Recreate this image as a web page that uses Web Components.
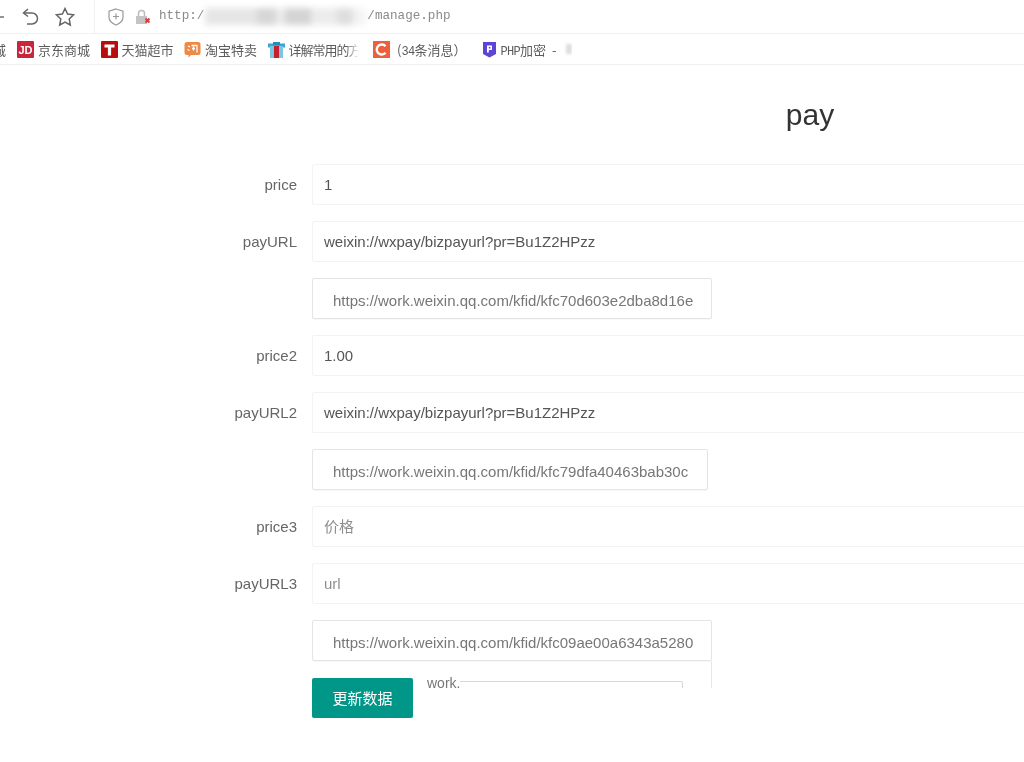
<!DOCTYPE html>
<html lang="zh">
<head>
<meta charset="utf-8">
<title>pay</title>
<style>
  html, body { margin: 0; height: 100%; background: #fff; overflow: hidden; }
  body { font-family: "Liberation Sans", "Noto Sans CJK SC", sans-serif; filter: blur(.35px); }
</style>
</head>
<body>
<browser-toolbar></browser-toolbar>
<bookmark-bar>
  <bookmark-item kind="clip" label="城" style="margin-right:0.500px"></bookmark-item>
  <bookmark-item kind="jd" label="京东商城"></bookmark-item>
  <bookmark-item kind="t" label="天猫超市"></bookmark-item>
  <bookmark-item kind="tao" label="淘宝特卖"></bookmark-item>
  <bookmark-item kind="box" label="详解常用的方" fade style="width:95px"></bookmark-item>
  <bookmark-item kind="c" label=" (34条消息）" style="width:98px"></bookmark-item>
  <bookmark-item kind="p" label="PHP加密  - "></bookmark-item>
</bookmark-bar>
<pay-form heading="pay">
  <form-row label="price" value="1"></form-row>
  <form-row label="payURL" value="weixin://wxpay/bizpayurl?pr=Bu1Z2HPzz"></form-row>
  <link-box width="400" value="https://work.weixin.qq.com/kfid/kfc70d603e2dba8d16e"></link-box>
  <form-row label="price2" value="1.00"></form-row>
  <form-row label="payURL2" value="weixin://wxpay/bizpayurl?pr=Bu1Z2HPzz"></form-row>
  <link-box width="396" value="https://work.weixin.qq.com/kfid/kfc79dfa40463bab30c"></link-box>
  <form-row label="price3" value="价格" muted></form-row>
  <form-row label="payURL3" value="url" muted></form-row>
  <link-box width="400" value="https://work.weixin.qq.com/kfid/kfc09ae00a6343a5280" dropdown="work."></link-box>
  <submit-button>更新数据</submit-button>
</pay-form>

<script>
  var icons = {
    jd: '<rect width="17" height="17" rx="1" fill="#c9253c"/><text x="8.5" y="13" font-size="11" font-weight="700" text-anchor="middle" fill="#fff" font-family="Liberation Sans">JD</text>',
    t: '<rect width="17" height="17" rx="1" fill="#b80d0d"/><path d="M3.5 3.5h10v3h-3.4v8H6.9v-8H3.5z" fill="#fff"/>',
    tao: '<path d="M3 1h11a2.5 2.5 0 0 1 2.5 2.500v8a2.500 2.500 0 0 1-2.500 2.500H7l-2.500 2.500V14H3a2.500 2.500 0 0 1-2.500-2.500v-8A2.500 2.500 0 0 1 3 1z" fill="#ee8a45"/><path d="M4 5l2 1M3.500 8.500l2 1M7.500 4.500h5.500v7M8 7.500h3M9.500 5.500v4" stroke="#fff" stroke-width="1.300" fill="none"/>',
    box: '<path d="M0 2.500h17v4H0z" fill="#35a9d6"/><path d="M2 5h13v12H2z" fill="#7cc6e4"/><path d="M6 5h5v12H6z" fill="#c5202f"/><path d="M5 1h7v3H5z" fill="#1f8fbd"/>',
    c: '<rect width="17" height="17" fill="#ee5f3d"/><path d="M12.500 5.200A5 5 0 1 0 12.500 11.800" stroke="#fff" stroke-width="2.400" fill="none"/>',
    p: '<path d="M1 1h13v12l-6.500 3.500L1 13z" fill="#5b45d6"/><path d="M5 4.500h5v4.500H6.800v2.500H5z" fill="#fff"/><path d="M6.800 6h1.600v1.500H6.800z" fill="#5b45d6"/>'
  }

  class BrowserToolbar extends HTMLElement {
    constructor() {
      super()
      this.attachShadow({ mode: 'open' })
      this.shadowRoot.innerHTML = `
        <style>
          :host { display: flex; align-items: center; height: 33px; border-bottom: 1px solid #f0f0f0; color: #777; overflow: hidden; }
          svg { display: block; flex: none; }
          .back { margin-left: -1px; margin-right: 16px; }
          .undo { margin-right: 15px; }
          .sep { width: 1px; height: 33px; background: #f1f1f1; margin: 0 13px 0 19px; }
          .shield { margin-right: 11px; }
          .lock { margin-right: 8px; }
          .url { font: 12.600px "Liberation Mono", monospace; color: #8a8a8a; white-space: pre; position: relative; top: -1px; }
          .hidden { width: 161px; height: 17px; margin: 0 1px 0 1px; flex: none; filter: blur(3px);
            background: linear-gradient(90deg, #e6e6e6 0 32%, #d6d6d6 32% 44%, #ececec 44% 50%, #d4d4d4 50% 66%, #ececec 66% 82%, #dedede 82% 92%, #f4f4f4 92%); }
        </style>
        <svg class="back" width="7" height="16" viewBox="0 0 7 16"><path d="M0 8h5" stroke="#666" stroke-width="1.400"/></svg>
        <svg class="undo" width="18" height="18" viewBox="0 0 18 18" fill="none" stroke="#666" stroke-width="1.500"><path d="M6 1L1.500 5 6 8.500"/><path d="M2 5h8a5.300 5.300 0 0 1 0 11H5"/></svg>
        <svg width="20" height="20" viewBox="0 0 20 20" fill="none" stroke="#666" stroke-width="1.500"><path d="M10 1.500l2.600 5.500 6 .8-4.400 4.200 1.100 6L10 15.100 4.700 18l1.100-6L1.400 7.800l6-.8z"/></svg>
        <div class="sep"></div>
        <svg class="shield" width="16" height="18" viewBox="0 0 16 18" fill="none" stroke="#999" stroke-width="1.200"><path d="M8 1l7 2.300v6c0 3.600-3 6.200-7 7.700-4-1.500-7-4.100-7-7.700v-6z"/><path d="M8 5.500v6M5 8.500h6"/></svg>
        <svg class="lock" width="16" height="16" viewBox="0 0 16 16"><path d="M3.500 7V4.500a3 3 0 0 1 6 0V7" fill="none" stroke="#bbb" stroke-width="1.500"/><rect x="1" y="7" width="11" height="8" fill="#c4c4c4"/><path d="M10.500 9.500l4 4M14.500 9.500l-4 4" stroke="#d9363e" stroke-width="1.800"/></svg>
        <span class="url">http:/</span><div class="hidden"></div><span class="url">/manage.php</span>
      `
    }
  }
  customElements.define('browser-toolbar', BrowserToolbar)

  class BookmarkBar extends HTMLElement {
    constructor() {
      super()
      this.attachShadow({ mode: 'open' })
      this.shadowRoot.innerHTML = `
        <style>
          :host { display: flex; align-items: center; gap: 10.500px; height: 30px; margin-left: -7px; border-bottom: 1px solid #f0f0f0; overflow: hidden; }
        </style>
        <slot></slot>
      `
    }
  }
  customElements.define('bookmark-bar', BookmarkBar)

  class BookmarkItem extends HTMLElement {
    constructor() {
      super()
      this.attachShadow({ mode: 'open' })
    }

    connectedCallback() {
      var kind = this.getAttribute('kind')
      var label = (this.getAttribute('label') || '').replace(/[A-Z0-9]+/g, '<i>$&</i>')
      var icon = icons[kind] ? '<svg width="17" height="17" viewBox="0 0 17 17">' + icons[kind] + '</svg>' : ''
      var tail = kind === 'p' ? '<span class="smudge"></span>' : ''
      this.shadowRoot.innerHTML = `
        <style>
          :host { display: inline-flex; align-items: center; gap: 4px; flex: none; overflow: hidden; }
          :host([kind="p"]) { gap: 2px; }
          svg { display: block; flex: none; }
          span { font: 13px "Noto Sans CJK SC", "Liberation Sans", sans-serif; color: #5c5c5c; white-space: pre; }
          i { font: 12px "Liberation Mono", monospace; letter-spacing: -.7px; }
          :host([fade]) span { letter-spacing: -1px; -webkit-mask-image: linear-gradient(90deg, #000 80%, transparent 97%); mask-image: linear-gradient(90deg, #000 80%, transparent 97%); }
          .smudge { width: 6px; height: 10px; background: #ddd; filter: blur(1.500px); margin-left: 5px; }
        </style>
        ${icon}<span>${label}</span>${tail}
      `
    }
  }
  customElements.define('bookmark-item', BookmarkItem)

  class PayForm extends HTMLElement {
    constructor() {
      super()
      this.attachShadow({ mode: 'open' })
    }

    connectedCallback() {
      this.shadowRoot.innerHTML = `
        <style>
          :host { display: block; width: 1620px; }
          h1 { margin: 0; height: 99px; padding-top: 32px; box-sizing: border-box; text-align: center; font: 400 30px/36px "Liberation Sans", sans-serif; color: #333; }
          .rows { display: flex; flex-direction: column; gap: 16px; padding-left: 187px; }
        </style>
        <h1>${this.getAttribute('heading') || ''}</h1>
        <div class="rows"><slot></slot></div>
      `
    }
  }
  customElements.define('pay-form', PayForm)

  class FormRow extends HTMLElement {
    constructor() {
      super()
      this.attachShadow({ mode: 'open' })
    }

    connectedCallback() {
      this.shadowRoot.innerHTML = `
        <style>
          :host { display: flex; height: 41px; font: 15px "Liberation Sans", "Noto Sans CJK SC", sans-serif; }
          .label { width: 110px; padding-right: 15px; text-align: right; line-height: 41px; color: #666; flex: none; }
          .field { flex: 1; box-sizing: border-box; border: 1px solid #f3f3f3; border-radius: 2px; padding-left: 11px; line-height: 39px; color: #555; }
          :host([muted]) .field { color: #8f8f8f; }
        </style>
        <div class="label">${this.getAttribute('label')}</div>
        <div class="field">${this.getAttribute('value')}</div>
      `
    }
  }
  customElements.define('form-row', FormRow)

  class LinkBox extends HTMLElement {
    constructor() {
      super()
      this.attachShadow({ mode: 'open' })
    }

    connectedCallback() {
      var width = this.getAttribute('width')
      var dropdown = this.getAttribute('dropdown')
      var drop = dropdown ? `
        <div class="drop">
          <span class="word">${dropdown}</span>
          <div class="line"></div>
        </div>` : ''
      this.shadowRoot.innerHTML = `
        <style>
          :host { display: block; height: 41px; margin-left: 125px; position: relative; font: 15px "Liberation Sans", sans-serif; }
          .box { width: ${width}px; height: 41px; box-sizing: border-box; border: 1px solid #e4e4e4; border-radius: 2px; padding: 2px 0 0 20px; line-height: 39px; color: #777; white-space: nowrap; overflow: hidden; box-shadow: 0 1px 1px rgba(0,0,0,.03); }
          .drop { position: absolute; left: 0; top: 41px; width: 400px; height: 27px; box-sizing: border-box; border-right: 1px solid #e8e8e8; }
          .word { position: absolute; left: 115px; top: 14px; font-size: 14px; line-height: 16px; color: #777; background: #fff; z-index: 1; }
          .line { position: absolute; left: 146px; right: 28px; top: 20px; height: 6px; border: 1px solid #d8d8d8; border-bottom: 0; border-radius: 2px 2px 0 0; }
        </style>
        <div class="box">${this.getAttribute('value')}</div>${drop}
      `
    }
  }
  customElements.define('link-box', LinkBox)

  class SubmitButton extends HTMLElement {
    constructor() {
      super()
      this.attachShadow({ mode: 'open' })
      this.shadowRoot.innerHTML = `
        <style>
          :host { display: block; width: 101px; height: 40px; margin: 1px 0 0 125px; background: #009688; border-radius: 2px; color: #fff; text-align: center; font: 15px/40px "Noto Sans CJK SC", sans-serif; }
        </style>
        <slot></slot>
      `
    }
  }
  customElements.define('submit-button', SubmitButton)
</script>
</body>
</html>
